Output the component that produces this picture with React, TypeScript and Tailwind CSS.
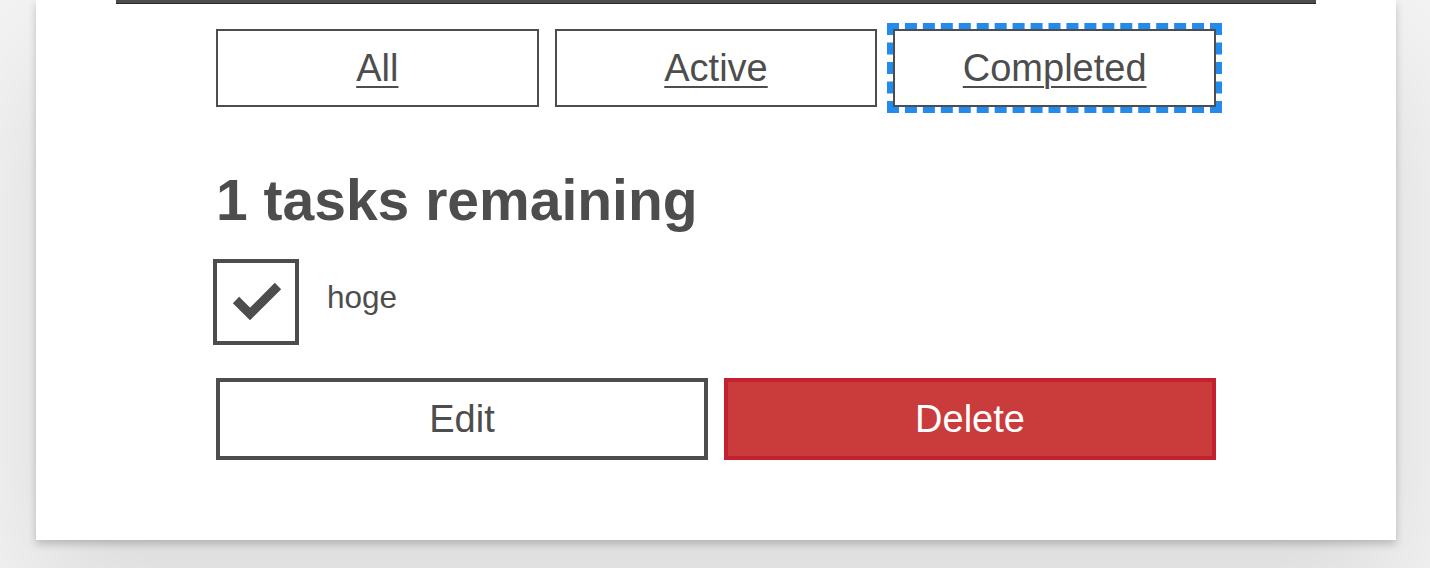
import React from "react";

export default function App() {
  const font = { fontFamily: '"Liberation Sans", Arial, sans-serif' };
  return (
    <div
      className="h-[568px] w-[1430px] overflow-hidden bg-[#f3f3f3] pl-[36px] text-[#4d4d4d]"
      style={font}
    >
      <div className="h-[540px] w-[1360px] bg-white px-[80px] shadow-[0_4px_8px_0_rgba(0,0,0,0.2),0_60px_120px_0_rgba(0,0,0,0.1)]">
        <div className="h-[4px] w-full border-b border-[#2a2a2a] bg-[#4d4d4d]" />
        <div className="px-[100px]">
          <div className="mt-[25px] grid grid-cols-3 gap-[16px]">
            <button className="flex h-[78px] items-center justify-center border-2 border-[#4d4d4d] bg-white text-[38px] leading-none text-[#4d4d4d] underline underline-offset-[5px] decoration-2">
              All
            </button>
            <button className="flex h-[78px] items-center justify-center border-2 border-[#4d4d4d] bg-white text-[38px] leading-none text-[#4d4d4d] underline underline-offset-[5px] decoration-2">
              Active
            </button>
            <button className="flex h-[78px] items-center justify-center border-2 border-[#4d4d4d] bg-white text-[38px] leading-none text-[#4d4d4d] underline underline-offset-[5px] decoration-2 outline-[6px] outline-dashed outline-[#228bec]">
              Completed
            </button>
          </div>
          <h2 className="mt-[65px] text-[57px] font-bold leading-none">1 tasks remaining</h2>
          <div className="mt-[30px] flex items-start">
            <div className="relative ml-[-3px] h-[86px] w-[86px] border-4 border-[#4d4d4d] bg-white">
              <svg
                className="absolute left-[-4px] top-[-4px]"
                width="86"
                height="86"
                viewBox="0 0 86 86"
              >
                <polyline
                  points="23,41 37,55 65,27"
                  fill="none"
                  stroke="#4d4d4d"
                  strokeWidth="9"
                  strokeLinecap="butt"
                  strokeLinejoin="miter"
                />
              </svg>
            </div>
            <span className="ml-[28px] mt-[23px] text-[31.5px] leading-none">hoge</span>
          </div>
          <div className="mt-[33px] grid grid-cols-2 gap-[16px]">
            <button className="flex h-[82px] items-center justify-center border-4 border-[#4d4d4d] bg-white text-[38px] leading-none text-[#4d4d4d]">
              Edit
            </button>
            <button className="flex h-[82px] items-center justify-center border-4 border-[#c5202f] bg-[#ca3c3c] text-[38px] leading-none text-white">
              Delete
            </button>
          </div>
        </div>
      </div>
    </div>
  );
}
